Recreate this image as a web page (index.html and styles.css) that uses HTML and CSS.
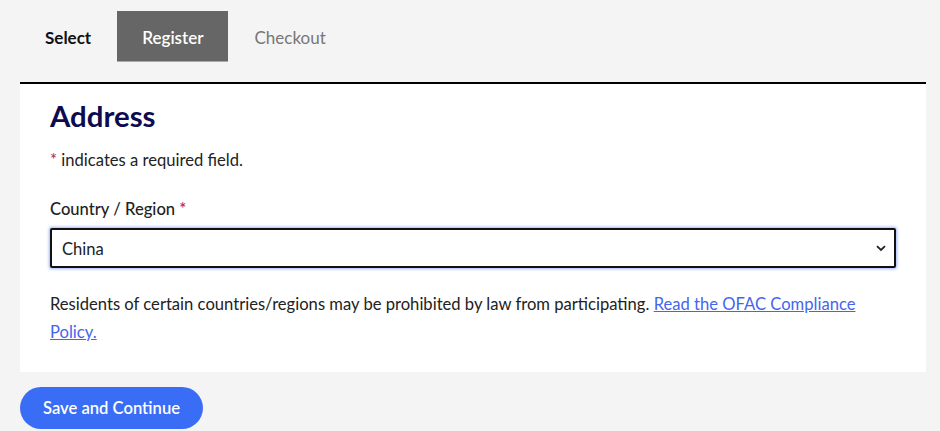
FILE: index.html
```html
<!DOCTYPE html>
<html lang="en">
<head>
    <meta charset="UTF-8">
    <meta name="viewport" content="width=device-width, initial-scale=1.0">
    <title>Address</title>
    <link rel="stylesheet" href="styles.css">
</head>
<body>

<div class="page">
    <!-- STEPS -->
    <nav class="steps">
        <span class="step done">Select</span>
        <span class="step current">Register</span>
        <span class="step">Checkout</span>
    </nav>

    <!-- ADDRESS FORM -->
    <div class="panel">
        <h2>Address</h2>
        <p class="note"><span class="req">*</span> indicates a required field.</p>

        <label class="field-label" for="country">Country / Region <span class="req">*</span></label>
        <div class="select-wrap">
            <select id="country">
                <option>China</option>
            </select>
            <svg class="chevron" width="10" height="7" viewBox="0 0 10 7"><path d="M1 1.2 L5 5 L9 1.2" fill="none" stroke="#222" stroke-width="1.8"/></svg>
        </div>

        <p class="info">Residents of certain countries/regions may be prohibited by law from participating. <a href="#">Read the OFAC Compliance Policy.</a></p>
    </div>

    <button class="save-btn">Save and Continue</button>
</div>

</body>
</html>
```

FILE: styles.css
```css
body {
    margin: 0;
    font-family: Lato, "Open Sans", sans-serif;
    background-color: #f4f4f4;
    color: #222;
}
.page {
    padding: 11px 14px 0 20px;
}
.steps {
    display: flex;
    height: 51px;
}
.step {
    display: flex;
    align-items: center;
    padding: 2px 25px 0 26px;
    font-size: 17px;
    color: #777;
}
.step.done {
    padding: 2px 26px 0 25px;
    font-weight: bold;
    color: #111;
}
.step.current {
    padding: 2px 25px 0;
    background: #666;
    color: white;
    font-weight: 600;
    border-bottom: 1px solid #aaa;
}
.panel {
    margin-top: 20px;
    background: white;
    border-top: 2px solid #000;
    padding: 14px 30px 26px;
}
h2 {
    margin: 0;
    font-size: 29.4px;
    line-height: 36px;
    color: #0d0b4f;
}
.note {
    margin: 15px 0 0;
    font-size: 16.6px;
    line-height: 22px;
}
.req {
    color: #b0245e;
}
.field-label {
    display: block;
    margin-top: 27px;
    font-size: 16.6px;
    font-weight: 500;
    line-height: 22px;
}
.select-wrap {
    position: relative;
    margin-top: 8px;
}
select {
    width: 100%;
    height: 40px;
    padding: 2px 10px 0;
    font-family: inherit;
    font-size: 16.6px;
    color: #222;
    background: white;
    border: 2px solid #111;
    border-radius: 2px;
    box-shadow: 0 0 3px 1px rgba(90, 130, 255, 0.6);
    appearance: none;
}
.chevron {
    position: absolute;
    right: 10px;
    top: 17px;
    pointer-events: none;
}
.info {
    margin: 22px 0 0;
    font-size: 16.6px;
    line-height: 28px;
}
.info a {
    color: #4466ee;
}
.save-btn {
    margin-top: 15px;
    padding: 0 23px;
    height: 42px;
    background: #3a6df5;
    border: none;
    border-radius: 21px;
    color: white;
    font-family: inherit;
    font-size: 16.6px;
    font-weight: 600;
    cursor: pointer;
}
```
